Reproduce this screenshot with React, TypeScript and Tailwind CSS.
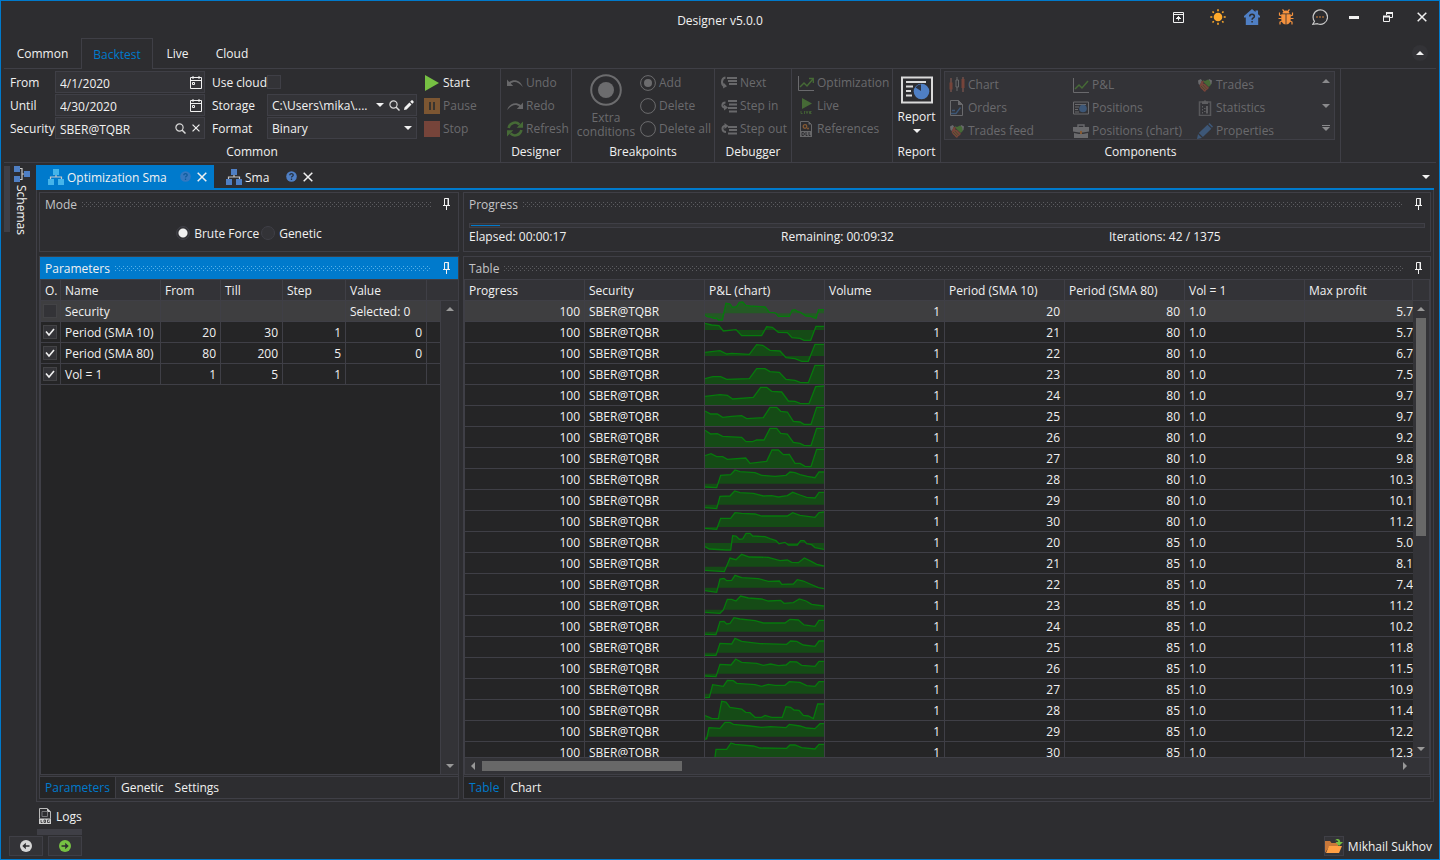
import React from "react";

type IconProps = { className?: string };

/* ---------- icons ---------- */

const Caret = ({ className = "" }: IconProps) => (
  <svg className={className} width="8" height="4" viewBox="0 0 8 4" aria-hidden="true">
    <path d="M0 0h8L4 4z" fill="currentColor" />
  </svg>
);

const CalendarIcon = () => (
  <svg width="12" height="13" viewBox="0 0 12 13" fill="none" stroke="#f1f1f1" aria-hidden="true">
    <path d="M.5 1.500h11v11H.5zM.5 4.500h11M3 0v3M9 0v3" />
    <path d="M2.500 6.500h2v2h-2z" />
  </svg>
);

const SearchIcon = () => (
  <svg width="11" height="11" viewBox="0 0 11 11" fill="none" stroke="#d8d8d8" aria-hidden="true">
    <circle cx="4.500" cy="4.500" r="3.600" strokeWidth="1.200" />
    <path d="M7 7l3.500 3.500" strokeWidth="1.500" />
  </svg>
);

const CloseIcon = ({ className = "size-2" }: IconProps) => (
  <svg className={className} viewBox="0 0 10 10" fill="none" stroke="#f1f1f1" strokeWidth="1.500" aria-hidden="true">
    <path d="M.7.7l8.600 8.600M9.300.7L.7 9.300" />
  </svg>
);

const EditIcon = () => (
  <svg width="10" height="10" viewBox="0 0 10 10" fill="#f1f1f1" aria-hidden="true">
    <path d="M0 10l.5-2.600L5.400 2.500l2.100 2.100L2.600 9.500zM6.200 1.700L7.300.6c.5-.5 1-.5 1.500 0l.6.6c.5.5.5 1 0 1.500L8.300 3.800z" />
  </svg>
);

const PlayIcon = () => (
  <svg width="16" height="16" viewBox="0 0 16 16" aria-hidden="true">
    <path d="M1 0l14 8-14 8z" fill="#76c043" />
  </svg>
);

const PauseIcon = () => (
  <svg width="16" height="16" viewBox="0 0 16 16" aria-hidden="true">
    <path d="M0 0h16v16H0z" fill="#7c5632" />
    <path d="M5 4h2v8H5zM9 4h2v8H9z" fill="#38342f" />
  </svg>
);

const StopIcon = () => (
  <svg width="16" height="16" viewBox="0 0 16 16" aria-hidden="true">
    <path d="M0 0h16v16H0z" fill="#76443a" />
  </svg>
);

const UndoIcon = ({ className = "" }: IconProps) => (
  <svg className={className} width="16" height="16" viewBox="0 0 16 16" aria-hidden="true">
    <path d="M0 4.500v6.500h6.200L3.800 8.600C7 6 11 6.500 15.800 12 13.800 5.500 7.500 3.300 2.200 7z" fill="#68686a" />
  </svg>
);

const RefreshIcon = () => (
  <svg width="16" height="16" viewBox="0 0 16 16" fill="none" stroke="#466a36" strokeWidth="2.500" aria-hidden="true">
    <path d="M1.600 7A6.400 6.400 0 0 1 12.500 3.600M14.400 9A6.400 6.400 0 0 1 3.500 12.400" />
    <path d="M16 .5v6.300H9.700zM0 15.500V9.200h6.300z" fill="#466a36" stroke="none" />
  </svg>
);

const RadioGlyph = ({ dot = false, size = "size-4" }: { dot?: boolean; size?: string }) => (
  <svg className={size} viewBox="0 0 32 32" fill="none" stroke="#6c6c6e" aria-hidden="true">
    <circle cx="16" cy="16" r="14.800" strokeWidth="2" />
    {dot && <circle cx="16" cy="16" r="8" fill="#6c6c6e" stroke="none" />}
  </svg>
);

const StepIcon = ({ kind }: { kind: "next" | "in" | "out" }) => (
  <svg width="16" height="16" viewBox="0 0 16 16" fill="none" stroke="#68686a" strokeWidth="2" aria-hidden="true">
    {kind === "next" && (
      <>
        <path d="M6 3h10M7 6h9M8 9h8" strokeWidth="1.800" />
        <path d="M4.500 2.500C0 3 0 10 3.500 11" />
        <path d="M2.500 7.500L6 11.200l-4 2.300z" fill="#68686a" stroke="none" />
      </>
    )}
    {kind === "in" && (
      <>
        <path d="M7 3h9M8 6.500h8M7 10h9M8 13.500h8" strokeWidth="1.800" />
        <path d="M4.500 4.500C.5 4.500.5 9.500 3.500 9.500" />
        <path d="M3 6.500l4 3-4 3z" fill="#68686a" stroke="none" />
      </>
    )}
    {kind === "out" && (
      <>
        <path d="M7 6h9M8 9h8M7 12.500h9" strokeWidth="1.800" />
        <path d="M5 11C.5 11 .5 5 4 5" />
        <path d="M3.500 2l4 3-4 3z" fill="#68686a" stroke="none" />
      </>
    )}
  </svg>
);

const LineChartIcon = ({ arrow = false }: { arrow?: boolean }) => (
  <svg width="16" height="16" viewBox="0 0 16 16" fill="none" aria-hidden="true">
    <path d="M.5 1v14.500H16" stroke="#6a6a6d" />
    <path d="M2 12l4-4 3 3 6-7" stroke="#466a36" strokeWidth="1.500" />
    {arrow && <path d="M11 3.500h4.300V8" stroke="#466a36" strokeWidth="1.300" />}
  </svg>
);

const LiveIcon = () => (
  <svg width="16" height="16" viewBox="0 0 16 16" aria-hidden="true">
    <path d="M4 0l10 5.500L4 11z" fill="#466a36" />
    <path d="M3 13v2.500h1.500M6.500 13v3M8 13l1 2.500 1-2.500M13.500 13.500h-2v2h2M11.500 14.500h1.500" stroke="#466a36" strokeWidth=".8" fill="none" />
  </svg>
);

const DllIcon = () => (
  <svg width="16" height="16" viewBox="0 0 16 16" fill="none" aria-hidden="true">
    <path d="M2.500 10V.5h8l3 3V10" stroke="#68686a" />
    <path d="M10.500.5v3h3z" fill="#68686a" />
    <path d="M2 10h12v6H2z" fill="#68686a" />
    <circle cx="7" cy="5.500" r="1.800" stroke="#865a33" strokeWidth="1.300" />
    <circle cx="10" cy="7.500" r="1" fill="#865a33" />
    <path d="M4 11.500v3h1.200c1.600 0 1.600-3 0-3zM8 11v3.500h1.500M11 11v3.500h1.500" stroke="#2d2d30" />
  </svg>
);

const ReportIcon = () => (
  <svg width="32" height="28" viewBox="0 0 32 28" aria-hidden="true">
    <path d="M1 1.500h30v25H1z" fill="none" stroke="#dadada" strokeWidth="2" />
    <path d="M5 6h20M5 10.500h7M5 15h5M5 19.500h6" stroke="#dadada" strokeWidth="1.800" />
    <circle cx="20.500" cy="15.500" r="7.800" fill="#4f7fc4" />
    <path d="M20 15V8.200A7 7 0 0 0 14.500 11.500z" fill="#2b3240" />
  </svg>
);

const CandlesIcon = () => (
  <svg width="16" height="16" viewBox="0 0 16 16" aria-hidden="true">
    <path d="M2 1v14M8 0v14M14 0v15" stroke="#68686a" />
    <path d="M.5 5.500h3v7h-3zM12.500 2h3v9h-3z" fill="#76443a" />
    <path d="M2 1v14M14 0v15" stroke="#76443a" />
    <path d="M7 3h2.500v7H7z" fill="#333337" stroke="#68686a" />
  </svg>
);

const OrdersIcon = () => (
  <svg width="16" height="16" viewBox="0 0 16 16" fill="none" aria-hidden="true">
    <path d="M1.500 15.500V.5h8l4 4v11z" stroke="#6a6a6d" />
    <path d="M9 0l5 5H9z" fill="#6a6a6d" />
    <path d="M2 13.500h5l4.500-6M3 10.500h3" stroke="#3d5777" strokeWidth="1.300" />
  </svg>
);

const HandshakeIcon = () => (
  <svg width="16" height="16" viewBox="0 0 16 16" aria-hidden="true">
    <path d="M1 3.500L3.800 2 5 3.500 3 8 1.500 7zM15 3.500L12.200 2 11 3.500 13 8l1.500-1z" fill="#6a6a6d" />
    <path d="M5.500 3L8 4l3-1.500 2 1.500.8 4-2 2L7 5.500z" fill="#466a36" />
    <path d="M4.500 4l2.500.3-1 2.200 1.800.3 4.200 4-1 1.200-1 .8-1 .8L8 15l-1.500-1-1-1.200L4 11.500 2.500 9z" fill="#76443a" />
    <path d="M4 9l4 4M6 8l3.500 4" stroke="#33522b" strokeWidth=".7" />
  </svg>
);

const PositionsIcon = () => (
  <svg width="16" height="16" viewBox="0 0 16 16" aria-hidden="true">
    <path d="M.5 2h15v12H.5z" fill="none" stroke="#6a6a6d" />
    <path d="M2 4.500h11M2 7h4M2 9.500h3M2 12h4" stroke="#6a6a6d" />
    <circle cx="10" cy="8.500" r="3.800" fill="#3d5777" />
  </svg>
);

const BriefcaseIcon = () => (
  <svg width="16" height="16" viewBox="0 0 16 16" aria-hidden="true">
    <path d="M5 4V2h6v2" fill="none" stroke="#6a6a6d" strokeWidth="1.400" />
    <path d="M0 4h16v4.500l-6 1H6l-6-1zM1 10l5 1h4l5-1v5H1z" fill="#6a6a6d" />
    <path d="M7 8h2v3H7z" fill="#865a33" />
  </svg>
);

const ClipboardIcon = () => (
  <svg width="16" height="16" viewBox="0 0 16 16" aria-hidden="true">
    <path d="M2.500 2h11v13.500h-11z" fill="none" stroke="#58585b" strokeWidth="1.500" />
    <path d="M5 1.500h1.500L8 0l1.500 1.500H11V4H5zM5 6h1v1.500H5zM5 9h1v1.500H5zM5 12h1v1.500H5zM9 6h2v7.500H9zM7 8h1.500v1H7zM7 11h1.500v1H7z" fill="#5e5e61" />
  </svg>
);

const PencilIcon = () => (
  <svg width="16" height="16" viewBox="0 0 16 16" fill="#3d5777" aria-hidden="true">
    <path d="M0 16l1-5 4 4zM1.800 10L10.500 1.800l3.900 3.900L5.900 14zM11.300 1L12.500 0 16 3.600l-1 1.200z" />
  </svg>
);

const SchemaIcon = ({ accent = "#4f7fc4", className = "" }: { accent?: string; className?: string }) => (
  <svg className={className} width="16" height="16" viewBox="0 0 16 16" aria-hidden="true">
    <path d="M8 5v3M2.500 11V8h11v3" fill="none" stroke="#c8c8c8" strokeWidth="1.200" />
    <path d="M5 0h6v6H5zM0 10h6v6H0zM10 10h6v6h-6z" fill={accent} />
  </svg>
);

const HelpIcon = ({ dim = false }: { dim?: boolean }) => (
  <svg width="11" height="11" viewBox="0 0 11 11" aria-hidden="true">
    <circle cx="5.500" cy="5.500" r="5.300" fill={dim ? "#3478c0" : "#4f7fc4"} />
    <path d="M3.800 4.200c0-2 3.400-2 3.400 0 0 1.100-1.700 1.100-1.700 2.300M5.500 7.600V9" fill="none" stroke={dim ? "#0e5c9c" : "#25303f"} strokeWidth="1.300" />
  </svg>
);

const PinIcon = () => (
  <svg width="7" height="12" viewBox="0 0 7 12" fill="none" stroke="#f1f1f1" aria-hidden="true">
    <path d="M1.500 7V.5h4V7M0 7.500h7M3.500 7.500V12" />
    <path d="M5 0v7" />
  </svg>
);

const DockIcon = () => (
  <svg width="11" height="11" viewBox="0 0 11 11" fill="none" stroke="#f1f1f1" aria-hidden="true">
    <path d="M.5.5h10v10H.5zM.5 2.500h10" />
    <path d="M5 4h1v1h1v1h1v1H6v1.500H5V7H3V6h1V5h1z" fill="#f1f1f1" stroke="none" />
  </svg>
);

const SunIcon = () => (
  <svg width="16" height="16" viewBox="0 0 16 16" fill="none" stroke="#ffaa2b" strokeWidth="1.600" aria-hidden="true">
    <circle cx="8" cy="8" r="4.300" fill="#ffaa2b" stroke="none" />
    <path d="M8 .3v2M8 13.700v2M.3 8h2M13.700 8h2M2.500 2.500l1.300 1.300M12.200 12.200l1.300 1.300M2.500 13.500l1.300-1.300M12.200 3.800l1.300-1.300" />
  </svg>
);

const HomeHelpIcon = () => (
  <svg width="16" height="16" viewBox="0 0 16 16" aria-hidden="true">
    <path d="M8 0l3.500 3V1.500H14v3.700l2 1.800v1.500h-1.800V16H1.800V8.500H0V7z" fill="#4f7fc4" />
    <path d="M5.700 7.500c0-3 4.700-3 4.700 0 0 1.500-2.300 1.500-2.300 3.200M8.100 12v1.600" fill="none" stroke="#2d2d30" strokeWidth="1.500" />
  </svg>
);

const BugIcon = () => (
  <svg width="16" height="16" viewBox="0 0 16 16" aria-hidden="true">
    <path d="M4.500 4.500a3.500 3 0 0 1 7 0zM3.300 5.300h4.300v10.200C4.700 15.200 3.300 13 3.300 10zM12.700 5.300H8.400v10.200c2.900-.3 4.300-2.500 4.300-5.500z" fill="#f5923e" />
    <path d="M6 2L4.500.5M10 2L11.500.5M3.800 7L1.500 6V3.500M12.200 7l2.300-1V3.500M3.700 9.500H.5M12.300 9.500h3.200M4 12l-2 1v2.500M12 12l2 1v2.500" fill="none" stroke="#f5923e" strokeWidth="1.200" />
  </svg>
);

const ChatIcon = () => (
  <svg width="16" height="16" viewBox="0 0 16 16" fill="none" aria-hidden="true">
    <path d="M2.500 12.300A7.200 7.200 0 1 1 5.500 14.700L.8 15.300z" stroke="#c8c8c8" strokeWidth="1.200" />
    <path d="M4.200 7.200h1.600v1.500H4.200zM7.200 7.200h1.600v1.500H7.200zM10.200 7.200h1.600v1.500h-1.600z" fill="#b8733a" />
  </svg>
);

const MinimizeIcon = () => (
  <svg width="10" height="3" viewBox="0 0 10 3" aria-hidden="true">
    <path d="M0 0h10v3H0z" fill="#f1f1f1" />
  </svg>
);

const RestoreIcon = () => (
  <svg width="10" height="10" viewBox="0 0 10 10" fill="none" stroke="#f1f1f1" aria-hidden="true">
    <path d="M3.500 3V.5h6v5H7" />
    <path d="M3 1h7M0 4.500h7" strokeWidth="2" />
    <path d="M.5 4v5.500h6V4" />
  </svg>
);

const LogIcon = () => (
  <svg width="12" height="16" viewBox="0 0 12 16" fill="none" aria-hidden="true">
    <path d="M.5 10.500V.5H8L11.500 4v6.500" stroke="#b9b9b9" />
    <path d="M8 0l4 4H8zM0 10.500h12V16H0z" fill="#d0d0d0" />
    <path d="M3 3.500h5.500v5H3z" stroke="#77777a" />
    <path d="M2 12v2.500h1.500M5 12h1.500v2.500H5zM10.500 12H8.500v2.500h2V13.500" stroke="#3a3a3d" strokeWidth=".9" />
  </svg>
);

const ArrowCircle = ({ flip = false, color }: { flip?: boolean; color: string }) => (
  <svg className={flip ? "rotate-180" : ""} width="12" height="12" viewBox="0 0 12 12" aria-hidden="true">
    <circle cx="6" cy="6" r="6" fill={color} />
    <path d="M2.500 5.200h3.700V2.800L9.700 6 6.200 9.200V6.800H2.500z" fill="#2d2d30" />
  </svg>
);

const FolderIcon = () => (
  <svg width="18" height="16" viewBox="0 0 18 16" aria-hidden="true">
    <path d="M0 15V3h5l1.500 2H13v4H4z" fill="#c8783a" />
    <path d="M4 8h13l-3 7H1z" fill="#ff9f43" />
    <path d="M10 2.500C12 .3 15 .5 15.300 4H18l-4 4-3.500-4h2.700c-.2-1.300-1.500-2-3.200-1.500z" fill="#76c043" />
  </svg>
);

/* ---------- small building blocks ---------- */

const RibbonGroup = ({ caption, className = "", children }: { caption?: string; className?: string; children: React.ReactNode }) => (
  <section className={`flex shrink-0 flex-col border-r border-[#3f3f46] ${className}`}>
    <div className="flex h-[71px] pt-[2px]">{children}</div>
    <h2 className="flex h-[22px] items-center justify-center pt-[2px]">{caption}</h2>
  </section>
);

const RibbonButton = ({ icon, label, enabled = false }: { icon: React.ReactNode; label: string; enabled?: boolean }) => (
  <button type="button" disabled={!enabled} className={`flex h-[23px] items-center gap-[3px] whitespace-nowrap ${enabled ? "text-[#f1f1f1]" : "text-[#6a6a6d]"}`}>
    <span className="flex w-4 shrink-0 justify-center">{icon}</span>
    {label}
  </button>
);

const Field = "flex h-[22px] w-[150px] items-center border border-[#3f3f46] bg-[#333337]";
const FieldInput = "h-5 min-w-0 flex-1 appearance-none bg-transparent pl-1 pt-[2px] text-[#f1f1f1] outline-none";
const FieldLabel = "h-[22px] whitespace-nowrap leading-6";

const DateField = ({ id, value }: { id: string; value: string }) => (
  <div className={Field}>
    <input id={id} type="text" defaultValue={value} className={FieldInput} />
    <button type="button" aria-label="Open calendar" className="mr-[2px]"><CalendarIcon /></button>
  </div>
);

const Dots = ({ light = false }: { light?: boolean }) => (
  <span
    className={`h-[5px] flex-1 [background-position:0_0,2px_2px] [background-size:4px_4px] ${
      light
        ? "[background-image:conic-gradient(at_1px_1px,transparent_75%,#59b0e8_75%),conic-gradient(at_1px_1px,transparent_75%,#59b0e8_75%)]"
        : "[background-image:conic-gradient(at_1px_1px,transparent_75%,#5c5c60_75%),conic-gradient(at_1px_1px,transparent_75%,#5c5c60_75%)]"
    }`}
  />
);

const PanelHeader = ({ title, active = false }: { title: string; active?: boolean }) => (
  <header className={`flex h-[22px] shrink-0 items-center gap-[5px] pl-[5px] pr-2 ${active ? "bg-[#007acc] text-[#f1f1f1]" : "text-[#c4c4c6]"}`}>
    <h3 className="pt-[2px]">{title}</h3>
    <Dots light={active} />
    <button type="button" aria-label={`Pin ${title}`} className="ml-[7px]"><PinIcon /></button>
  </header>
);

const Panel = ({ className = "", children }: { className?: string; children: React.ReactNode }) => (
  <section className={`flex min-h-0 flex-col border border-[#3f3f46] ${className}`}>{children}</section>
);

const PanelTabs = ({ tabs }: { tabs: string[] }) => (
  <nav className="mt-px flex h-[22px] shrink-0 border-t border-[#3f3f46]">
    {tabs.map((t, i) => (
      <button key={t} type="button" className={i === 0 ? "border-r border-[#3f3f46] bg-[#252526] px-[5px] text-[#007acc]" : "pl-[5px] pr-[6px]"}>
        {t}
      </button>
    ))}
  </nav>
);

const TickBox = ({ label, checked }: { label: string; checked: boolean }) => (
  <span className="relative ml-[2px] block size-[14px]">
    <input type="checkbox" aria-label={label} defaultChecked={checked} className="peer block size-[14px] appearance-none border border-[#434346] bg-[#333337]" />
    <svg className="pointer-events-none absolute inset-0 hidden peer-checked:block" width="14" height="14" viewBox="0 0 14 14" fill="none" stroke="#f1f1f1" strokeWidth="1.600" aria-hidden="true">
      <path d="M3 6.500l3 3.500 5-6" />
    </svg>
  </span>
);

const Radio = ({ label, checked = false }: { label: string; checked?: boolean }) => (
  <label className="flex items-center gap-1">
    <input
      type="radio"
      name="mode"
      defaultChecked={checked}
      className="size-[14px] appearance-none rounded-full border border-[#3f3f46] bg-[#333337] checked:bg-[radial-gradient(circle,#f1f1f1_4px,#333337_5px)]"
    />
    <span className="pt-px">{label}</span>
  </label>
);

/* ---------- data ---------- */

type Spark = { base: number; points: string };

const sparks: Spark[] = [
  { base: 37, points: "15,42 22,47 35,49 42,52 50,52 55,57 67,57 78,7 90,9 97,19 110,17 118,4 128,3 137,13 150,15 170,16 195,18 200,24 208,34 222,35 228,37 235,46 268,46 276,28 285,26 293,32 303,35 318,45 332,46 348,52 356,26 372,26" },
  { base: 24, points: "15,4 35,9 57,11 70,27 108,23 125,41 185,41 200,14 217,16 235,31 262,32 276,47 300,49 312,55 332,55 348,13 372,13" },
  { base: 39, points: "15,28 60,23 80,33 95,31 148,34 170,5 188,7 210,22 240,24 258,44 285,47 305,55 325,55 345,4 372,4" },
  { base: 60, points: "15,44 38,38 62,38 80,46 148,44 170,14 195,14 210,23 238,25 258,46 285,49 300,55 325,56 345,4 372,4" },
  { base: 60, points: "15,34 60,29 82,31 98,42 160,37 182,7 200,7 215,19 245,21 265,48 285,49 300,55 327,56 347,5 372,3" },
  { base: 60, points: "15,15 32,24 52,24 68,34 95,31 125,29 140,38 190,35 210,4 230,4 242,16 262,18 280,46 300,48 312,55 333,55 350,4 372,4" },
  { base: 60, points: "15,10 32,21 52,20 68,28 125,31 138,44 158,44 170,39 192,39 210,4 230,4 242,19 262,21 280,46 300,49 312,55 333,56 350,4 372,4" },
  { base: 60, points: "15,23 33,17 50,26 68,26 82,34 137,30 150,46 200,40 216,6 235,6 250,20 268,19 285,46 300,46 315,55 333,56 350,4 372,4" },
  { base: 44, points: "15,54 50,56 62,19 92,17 105,3 120,8 165,11 185,19 225,22 258,19 270,9 285,11 300,17 322,22 345,26 357,9 372,9" },
  { base: 44, points: "15,53 50,56 60,19 90,18 104,3 120,8 160,10 190,18 215,17 235,21 262,17 278,7 300,15 320,22 345,24 357,7 372,7" },
  { base: 48, points: "15,52 50,55 62,22 92,22 105,5 125,7 165,9 185,15 262,15 278,5 300,13 345,19 357,5 372,3" },
  { base: 33, points: "15,44 28,51 80,54 92,54 98,11 108,12 118,22 128,21 138,4 150,4 158,12 195,14 210,20 228,26 237,35 255,31 265,39 292,39 302,26 312,26 320,35 335,38 345,47 372,52" },
  { base: 41, points: "15,52 73,56 90,15 108,20 125,4 148,12 205,13 240,23 262,21 275,28 295,29 313,15 335,26 350,34 372,39" },
  { base: 41, points: "15,50 50,55 60,15 72,13 80,20 95,19 105,4 125,11 175,14 205,22 238,21 245,31 280,30 292,17 310,21 330,30 355,41 372,44" },
  { base: 44, points: "15,52 60,55 70,45 82,13 95,13 108,18 122,3 145,9 185,12 205,18 242,16 252,25 280,23 298,12 318,18 335,28 372,33" },
  { base: 47, points: "15,55 48,56 60,17 72,16 80,24 90,22 102,5 120,9 165,14 190,21 255,21 270,10 295,12 312,27 345,31 357,13 372,13" },
  { base: 47, points: "15,55 48,55 60,19 95,21 105,4 125,13 180,20 260,22 272,12 290,13 310,24 345,28 357,12 372,12" },
  { base: 47, points: "15,54 48,56 60,19 93,21 107,3 125,13 170,16 190,22 212,18 235,23 258,21 270,11 290,12 305,22 345,25 357,10 372,10" },
  { base: 44, points: "15,56 28,55 38,17 70,22 82,4 100,5 110,13 165,17 185,22 205,16 225,19 255,19 268,8 300,10 320,20 345,22 357,8 372,8" },
  { base: 60, points: "15,47 35,55 55,56 65,4 78,6 90,22 125,27 137,37 150,38 165,52 185,52 195,46 215,52 247,52 258,20 272,22 282,30 297,31 310,46 325,48 340,56 353,12 372,12" },
  { base: 47, points: "15,55 20,53 27,20 60,22 75,4 90,4 100,10 150,15 185,19 212,17 258,20 268,10 300,15 320,21 345,23 360,8 372,8" },
  { base: 60, points: "43,60 48,22 80,22 93,3 105,7 160,12 180,18 260,19 270,9 285,9 305,17 345,21 357,7 372,7" },
];

const profits = ["5.7", "5.7", "6.7", "7.5", "9.7", "9.7", "9.2", "9.8", "10.3", "10.1", "11.2", "5.0", "8.1", "7.4", "11.2", "10.2", "11.8", "11.5", "10.9", "11.4", "12.2", "12.3"];

const results = profits.map((profit, i) => ({
  profit,
  spark: sparks[i],
  fast: 20 + (i % 11),
  slow: i < 11 ? 80 : 85,
}));

const params = [
  { on: false, name: "Security", from: "", till: "", step: "", value: "Selected: 0" },
  { on: true, name: "Period (SMA 10)", from: "20", till: "30", step: "1", value: "0" },
  { on: true, name: "Period (SMA 80)", from: "80", till: "200", step: "5", value: "0" },
  { on: true, name: "Vol = 1", from: "1", till: "5", step: "1", value: "" },
];

const Sparkline = ({ base, points }: Spark) => {
  const first = points.slice(0, points.indexOf(","));
  return (
    <svg className="block h-5 w-full" viewBox="15 0 357 60" preserveAspectRatio="none" aria-hidden="true">
      <polygon points={`${first},${base} ${points} 372,${base}`} fill="#008000" fillOpacity=".42" />
      <polyline points={points} fill="none" stroke="#067a0c" strokeWidth="1.300" vectorEffect="non-scaling-stroke" />
    </svg>
  );
};

/* ---------- sections ---------- */

const TitleBar = () => (
  <header className="grid h-[37px] shrink-0 grid-cols-[1fr_auto_1fr]">
    <span />
    <h1 className="self-center pt-[2px]">Designer v5.0.0</h1>
    <div className="flex items-start justify-end">
      {[
        { n: "Dock", i: <DockIcon />, c: "mr-[6px]" },
        { n: "Theme", i: <SunIcon />, c: "" },
        { n: "Help", i: <HomeHelpIcon />, c: "" },
        { n: "Report a bug", i: <BugIcon />, c: "" },
        { n: "Chat", i: <ChatIcon />, c: "" },
        { n: "Minimize", i: <MinimizeIcon />, c: "" },
        { n: "Restore", i: <RestoreIcon />, c: "" },
        { n: "Close", i: <CloseIcon className="size-[10px]" />, c: "" },
      ].map((b) => (
        <button key={b.n} type="button" aria-label={b.n} className={`flex h-8 w-[34px] items-center justify-center ${b.c}`}>
          {b.i}
        </button>
      ))}
    </div>
  </header>
);

const RibbonTabs = () => (
  <nav className="mx-[3px] flex h-[31px] shrink-0 text-center">
    <button type="button" className="w-[77px] border-b border-[#3f3f46] pt-[2px]">Common</button>
    <button type="button" className="w-[72px] border-x border-t border-[#3f3f46] pt-px text-[#007acc]">Backtest</button>
    <button type="button" className="w-[49px] border-b border-[#3f3f46] pt-[2px]">Live</button>
    <button type="button" className="w-[60px] border-b border-[#3f3f46] pt-[2px]">Cloud</button>
    <div className="flex flex-1 items-center justify-end border-b border-[#3f3f46] pr-2">
      <button type="button" aria-label="Collapse ribbon" className="flex size-4 items-center justify-center rounded-full bg-[#333337]">
        <Caret className="rotate-180" />
      </button>
    </div>
  </nav>
);

const Ribbon = () => (
  <div className="mx-[3px] flex shrink-0 overflow-hidden border-b border-[#3f3f46]">
    <RibbonGroup caption="Common" className="w-[497px]">
      <div className="grid grid-cols-[45px_157px_55px_157px_auto] grid-rows-[repeat(3,23px)] pl-[6px]">
        <label htmlFor="from" className={FieldLabel}>From</label>
        <DateField id="from" value="4/1/2020" />
        <label htmlFor="cloud" className={FieldLabel}>Use cloud</label>
        <span className="flex h-[22px] items-center">
          <input id="cloud" type="checkbox" className="size-[14px] appearance-none border border-[#3f3f46] bg-[#333337]" />
        </span>
        <RibbonButton icon={<PlayIcon />} label="Start" enabled />

        <label htmlFor="until" className={FieldLabel}>Until</label>
        <DateField id="until" value="4/30/2020" />
        <label htmlFor="storage" className={FieldLabel}>Storage</label>
        <div className={Field}>
          <select id="storage" className={FieldInput}>
            <option>{"C:\\Users\\mika\\...."}</option>
          </select>
          <Caret className="mr-[5px]" />
          <button type="button" aria-label="Browse storage" className="mr-1"><SearchIcon /></button>
          <button type="button" aria-label="Edit storage" className="mr-[2px]"><EditIcon /></button>
        </div>
        <RibbonButton icon={<PauseIcon />} label="Pause" />

        <label htmlFor="security" className={FieldLabel}>Security</label>
        <div className={Field}>
          <input id="security" type="text" defaultValue="SBER@TQBR" className={FieldInput} />
          <button type="button" aria-label="Find security" className="mr-[6px]"><SearchIcon /></button>
          <button type="button" aria-label="Clear security" className="mr-1"><CloseIcon /></button>
        </div>
        <label htmlFor="format" className={FieldLabel}>Format</label>
        <div className={Field}>
          <select id="format" className={FieldInput}>
            <option>Binary</option>
          </select>
          <Caret className="mr-1" />
        </div>
        <RibbonButton icon={<StopIcon />} label="Stop" />
      </div>
    </RibbonGroup>

    <RibbonGroup caption="Designer" className="w-[71px]">
      <div className="pl-[6px]">
        <RibbonButton icon={<UndoIcon />} label="Undo" />
        <RibbonButton icon={<UndoIcon className="-scale-x-100" />} label="Redo" />
        <RibbonButton icon={<RefreshIcon />} label="Refresh" />
      </div>
    </RibbonGroup>

    <RibbonGroup caption="Breakpoints" className="w-[143px]">
      <button type="button" disabled className="flex w-[68px] flex-col items-center pt-[3px] leading-[14px] text-[#6a6a6d]">
        <RadioGlyph dot size="size-8" />
        <span className="mt-[5px]">Extra conditions</span>
      </button>
      <div>
        <RibbonButton icon={<RadioGlyph dot />} label="Add" />
        <RibbonButton icon={<RadioGlyph />} label="Delete" />
        <RibbonButton icon={<RadioGlyph />} label="Delete all" />
      </div>
    </RibbonGroup>

    <RibbonGroup caption="Debugger" className="w-[77px]">
      <div className="pl-[6px]">
        <RibbonButton icon={<StepIcon kind="next" />} label="Next" />
        <RibbonButton icon={<StepIcon kind="in" />} label="Step in" />
        <RibbonButton icon={<StepIcon kind="out" />} label="Step out" />
      </div>
    </RibbonGroup>

    <RibbonGroup className="w-[101px]">
      <div className="pl-[6px]">
        <RibbonButton icon={<LineChartIcon arrow />} label="Optimization" />
        <RibbonButton icon={<LiveIcon />} label="Live" />
        <RibbonButton icon={<DllIcon />} label="References" />
      </div>
    </RibbonGroup>

    <RibbonGroup caption="Report" className="w-[48px]">
      <button type="button" className="flex flex-1 flex-col items-center pt-[5px]">
        <ReportIcon />
        <span className="mt-[5px] leading-4">Report</span>
        <Caret className="mt-1" />
      </button>
    </RibbonGroup>

    <RibbonGroup caption="Components" className="w-[400px]">
      <div className="mx-[3px] mb-[2px] flex h-[69px] w-[391px] border border-[#3f3f46] bg-[#333337] pl-1">
        <div className="grid flex-1 grid-cols-[124px_124px_auto] grid-rows-[repeat(3,23px)] pt-px">
          <RibbonButton icon={<CandlesIcon />} label="Chart" />
          <RibbonButton icon={<LineChartIcon />} label="P&L" />
          <RibbonButton icon={<HandshakeIcon />} label="Trades" />
          <RibbonButton icon={<OrdersIcon />} label="Orders" />
          <RibbonButton icon={<PositionsIcon />} label="Positions" />
          <RibbonButton icon={<ClipboardIcon />} label="Statistics" />
          <RibbonButton icon={<HandshakeIcon />} label="Trades feed" />
          <RibbonButton icon={<BriefcaseIcon />} label="Positions (chart)" />
          <RibbonButton icon={<PencilIcon />} label="Properties" />
        </div>
        <div className="flex w-4 flex-col text-[#8a8a8c]">
          <button type="button" aria-label="Scroll up" className="h-[23px] pb-1"><Caret className="mx-auto rotate-180" /></button>
          <button type="button" aria-label="Scroll down" className="h-[23px]"><Caret className="mx-auto" /></button>
          <button type="button" aria-label="Expand gallery" className="flex h-[23px] flex-col items-center justify-center gap-px">
            <span className="h-px w-2 bg-[#8a8a8c]" />
            <Caret />
          </button>
        </div>
      </div>
    </RibbonGroup>
  </div>
);

const DocumentTabs = () => (
  <nav className="flex h-[25px] shrink-0 border-b-2 border-[#007acc]">
    <div className="flex w-[178px] items-center bg-[#007acc] pl-3 pr-[7px]">
      <button type="button" className="flex flex-1 items-center gap-[3px] whitespace-nowrap"><SchemaIcon accent="#45b4ea" /><span className="pt-[2px]">Optimization Sma</span></button>
      <button type="button" aria-label="Help" className="mr-[6px]"><HelpIcon dim /></button>
      <button type="button" aria-label="Close Optimization Sma"><CloseIcon className="size-[10px]" /></button>
    </div>
    <div className="flex w-[106px] items-center pl-3 pr-[7px]">
      <button type="button" className="flex flex-1 items-center gap-[3px]"><SchemaIcon /><span className="pt-[2px]">Sma</span></button>
      <button type="button" aria-label="Help" className="mr-[6px]"><HelpIcon /></button>
      <button type="button" aria-label="Close Sma"><CloseIcon className="size-[10px]" /></button>
    </div>
    <button type="button" aria-label="All documents" className="ml-auto mr-1"><Caret /></button>
  </nav>
);

const th = "h-[21px] border-b border-r border-[#3f3f46] bg-[#333337] px-1 pb-0 pt-[2px] text-left font-normal whitespace-nowrap overflow-hidden";
const td = "h-[21px] border-b border-r border-[#3f3f46] px-1 pb-0 pt-[2px] whitespace-nowrap overflow-hidden";

const ParametersPanel = () => (
  <Panel className="flex-1">
    <PanelHeader title="Parameters" active />
    <div className="flex min-h-0 flex-1 border border-r-0 border-[#3f3f46] bg-[#252526]">
      <div className="min-w-0 flex-1 overflow-hidden">
        <table className="w-full table-fixed border-separate border-spacing-0">
          <colgroup>
            <col className="w-5" />
            <col className="w-[100px]" />
            <col className="w-[60px]" />
            <col className="w-[62px]" />
            <col className="w-[63px]" />
            <col className="w-[81px]" />
            <col />
          </colgroup>
          <thead>
            <tr>
              {["O.", "Name", "From", "Till", "Step", "Value"].map((h) => (
                <th key={h} className={th}>{h}</th>
              ))}
              <th aria-label="Filler" className="border-b border-[#3f3f46] bg-[#333337]" />
            </tr>
          </thead>
          <tbody>
            {params.map((p, i) => (
              <tr key={p.name} className={i === 0 ? "bg-[#3e3e40]" : ""}>
                <td className="h-[21px] border-b border-r border-[#3f3f46] p-0"><TickBox label={p.name} checked={p.on} /></td>
                <td className={td}>{p.name}</td>
                <td className={`${td} text-right`}>{p.from}</td>
                <td className={`${td} text-right`}>{p.till}</td>
                <td className={`${td} text-right`}>{p.step}</td>
                <td className={`${td} ${i === 0 ? "" : "text-right"}`}>{p.value}</td>
                <td className="border-b border-[#3f3f46] p-0" />
              </tr>
            ))}
          </tbody>
        </table>
      </div>
      <div className="flex w-[18px] flex-col bg-[#333337]">
        <div className="h-[21px] border-b border-[#3f3f46]" />
        <div className="flex flex-1 flex-col items-center justify-between border-l border-[#3f3f46] py-[6px] text-[#999999]">
          <Caret className="rotate-180" />
          <Caret />
        </div>
      </div>
    </div>
    <PanelTabs tabs={["Parameters", "Genetic", "Settings"]} />
  </Panel>
);

const ResultsPanel = () => (
  <Panel className="flex-1">
    <PanelHeader title="Table" />
    <div className="flex min-h-0 flex-1 flex-col border border-[#3f3f46] bg-[#252526]">
      <div className="flex min-h-0 flex-1">
        <div className="min-w-0 flex-1 overflow-hidden">
          <table className="w-full table-fixed border-separate border-spacing-0">
            <colgroup>
              <col className="w-[120px]" />
              <col className="w-[120px]" />
              <col className="w-[120px]" />
              <col className="w-[120px]" />
              <col className="w-[120px]" />
              <col className="w-[120px]" />
              <col className="w-[120px]" />
              <col />
            </colgroup>
            <thead>
              <tr>
                {["Progress", "Security", "P&L (chart)", "Volume", "Period (SMA 10)", "Period (SMA 80)", "Vol = 1", "Max profit"].map((h) => (
                  <th key={h} className={th}>{h}</th>
                ))}
              </tr>
            </thead>
            <tbody>
              {results.map((r, i) => (
                <tr key={i} className={i === 0 ? "bg-[#3e3e40]" : ""}>
                  <td className={`${td} text-right`}>100</td>
                  <td className={td}>SBER@TQBR</td>
                  <td className="h-[21px] border-b border-r border-[#3f3f46] p-0"><Sparkline {...r.spark} /></td>
                  <td className={`${td} text-right`}>1</td>
                  <td className={`${td} text-right`}>{r.fast}</td>
                  <td className={`${td} text-right`}>{r.slow}</td>
                  <td className={td}>1.0</td>
                  <td className="h-[21px] border-b border-[#3f3f46] p-0 pt-[2px] text-right">{r.profit}</td>
                </tr>
              ))}
            </tbody>
          </table>
        </div>
        <div className="flex w-4 flex-col bg-[#333337] text-[#999999]">
          <div className="h-[21px] border-b border-[#3f3f46]" />
          <div className="flex flex-1 flex-col items-center py-[6px]">
            <Caret className="rotate-180" />
            <div className="mt-[7px] h-[218px] w-[10px] bg-[#686868]" />
            <Caret className="mt-auto" />
          </div>
        </div>
      </div>
      <div className="flex h-[17px] shrink-0 items-center border-t border-[#3f3f46] bg-[#333337] pl-1 pr-[20px] text-[#999999]">
        <Caret className="rotate-90" />
        <div className="ml-[5px] h-[10px] w-[200px] bg-[#686868]" />
        <Caret className="ml-auto -rotate-90" />
      </div>
    </div>
    <PanelTabs tabs={["Table", "Chart"]} />
  </Panel>
);

const Workspace = () => (
  <main className="flex min-h-0 flex-1 pt-[2px]">
    <aside className="flex w-[35px] shrink-0 items-start pl-[3px] pt-px">
      <span className="h-[66px] w-[6px] bg-[#3f3f46]" />
      <button type="button" className="ml-1 flex flex-col items-start gap-[3px]">
        <SchemaIcon className="rotate-90" />
        <span className="leading-[14px] [writing-mode:vertical-rl]">Schemas</span>
      </button>
    </aside>
    <div className="mr-[5px] flex min-w-0 flex-1 flex-col">
      <DocumentTabs />
      <div className="flex min-h-0 flex-1 gap-1 border-x border-b border-[#3f3f46] p-[2px]">
        <div className="flex w-[420px] shrink-0 flex-col gap-1">
          <Panel className="h-[60px] shrink-0">
            <PanelHeader title="Mode" />
            <div className="flex flex-1 items-center justify-center gap-[2px]">
              <Radio label="Brute Force" checked />
              <Radio label="Genetic" />
            </div>
          </Panel>
          <ParametersPanel />
        </div>
        <div className="flex min-w-0 flex-1 flex-col gap-1">
          <Panel className="h-[60px] shrink-0">
            <PanelHeader title="Progress" />
            <div className="mx-[5px] mt-2 h-[5px] border border-[#3f3f46] bg-[#333337] p-px" role="progressbar" aria-valuenow={42} aria-valuemax={1375} aria-label="Iterations">
              <div className="h-px w-[3%] bg-[#007acc]" />
            </div>
            <div className="grid grid-cols-[312fr_328fr_316fr] px-[5px] leading-[18px]">
              <span>Elapsed: 00:00:17</span>
              <span>Remaining: 00:09:32</span>
              <span>Iterations: 42 / 1375</span>
            </div>
          </Panel>
          <ResultsPanel />
        </div>
      </div>
    </div>
  </main>
);

const Footer = () => (
  <footer className="shrink-0">
    <div className="flex h-[33px] pl-9">
      <button type="button" className="flex items-center gap-[5px] border-b-[6px] border-[#3f3f46] pl-[2px] pt-px">
        <LogIcon />
        <span className="pt-px">Logs</span>
      </button>
    </div>
    <div className="flex h-6 items-start pl-2 pr-[7px] pt-px">
      <button type="button" aria-label="Back" className="mr-[5px] flex h-5 w-[34px] items-center justify-center border border-[#3f3f46] bg-[#333337]"><ArrowCircle flip color="#d6d6d6" /></button>
      <button type="button" aria-label="Forward" className="flex h-5 w-[34px] items-center justify-center border border-[#3f3f46] bg-[#333337]"><ArrowCircle color="#76c043" /></button>
      <button type="button" className="ml-auto flex items-center gap-1">
        <span className="flex size-5 items-center justify-center border border-[#3f3f46] bg-[#333337]"><FolderIcon /></span>
        <span className="pt-px">Mikhail Sukhov</span>
      </button>
    </div>
  </footer>
);

export default function App() {
  return (
    <div className="flex h-screen flex-col overflow-hidden border border-[#007acc] bg-[#2d2d30] font-['Open_Sans','Noto_Sans',sans-serif] text-[12px] leading-4 text-[#f1f1f1]">
      <TitleBar />
      <RibbonTabs />
      <Ribbon />
      <Workspace />
      <Footer />
    </div>
  );
}
